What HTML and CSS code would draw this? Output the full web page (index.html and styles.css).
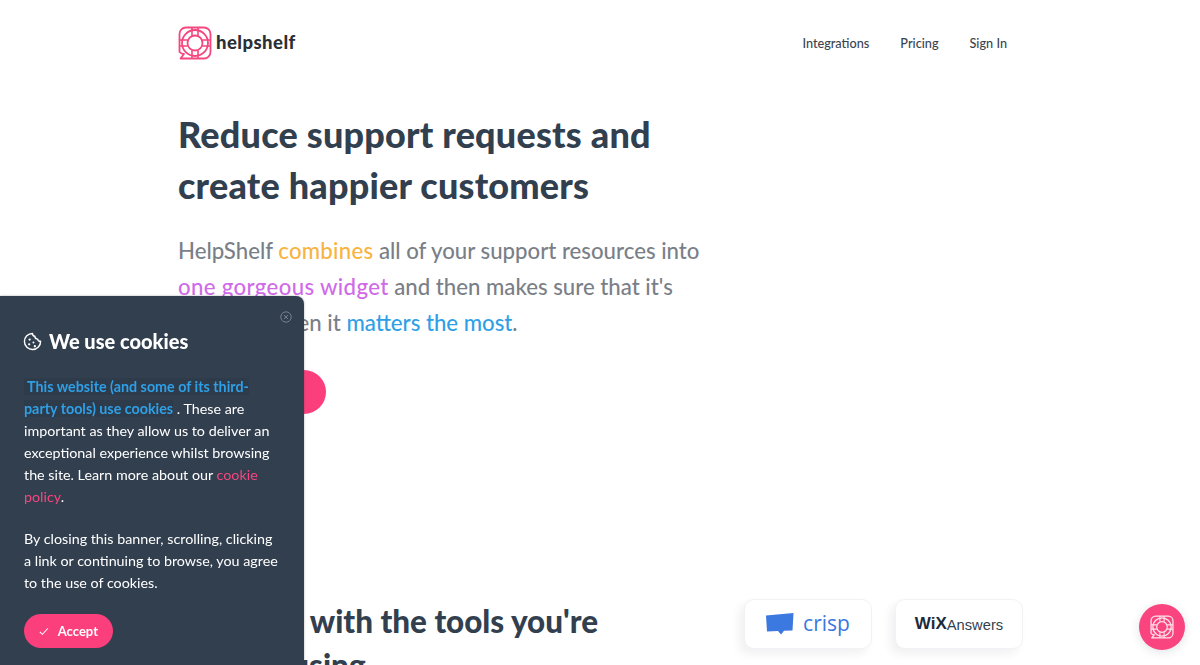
FILE: index.html
```html
<!DOCTYPE html>
<html lang="en">
<head>
<meta charset="utf-8">
<title>HelpShelf</title>
<link rel="stylesheet" href="styles.css">
</head>
<body>
<svg class="defs" width="0" height="0" aria-hidden="true">
  <symbol id="buoy" viewBox="0 0 34 34">
    <path d="M8 1.500h18a6.500 6.500 0 0 1 6.500 6.500v18a6.500 6.500 0 0 1-6.500 6.500H2.500l3.500-4.500A6.500 6.500 0 0 1 1.500 26V8A6.500 6.500 0 0 1 8 1.500z" fill="none" stroke="currentColor" stroke-width="1.800" stroke-linejoin="round"/>
    <circle cx="17" cy="17" r="13" fill="none" stroke="currentColor" stroke-width="1.800"/>
    <circle cx="17" cy="17" r="7.500" fill="none" stroke="currentColor" stroke-width="1.800"/>
    <path d="M14 1.500v8.200M20 1.500v8.200M14 24.300v8.200M20 24.300v8.200M1.500 14h8.200M1.500 20h8.200M24.300 14h8.200M24.300 20h8.200" fill="none" stroke="currentColor" stroke-width="1.600"/>
  </symbol>
</svg>

<div class="page">
  <header class="header">
    <a class="brand" href="#">
      <svg class="brand-icon"><use href="#buoy"/></svg>
      <span class="brand-name">helpshelf</span>
    </a>
    <nav class="nav">
      <a href="#">Integrations</a>
      <a href="#">Pricing</a>
      <a href="#">Sign In</a>
    </nav>
  </header>

  <section class="hero">
    <h1>Reduce support requests and<br>create happier customers</h1>
    <p class="lead">HelpShelf <span class="orange">combines</span> all of your support resources into<br><span class="purple">one gorgeous widget</span> and then makes sure that it's<br>available when it <span class="blue">matters the most</span>.</p>
    <a class="cta" href="#">Get started</a>
  </section>

  <section class="tools">
    <h2><span class="tight">Integrate</span> with the tools you're<br><span class="wide">already</span> using</h2>
    <div class="logos">
      <div class="logo-card">
        <svg class="crisp-icon" viewBox="0 0 28 22"><path d="M0 2.500L27.500 0l-1 17.500-8.500.3-3 3.700-3-3.500-11 .5z" fill="#3b78e0"/></svg>
        <span class="crisp">crisp</span>
      </div>
      <div class="logo-card">
        <span class="wix">WiX</span><span class="answers">Answers</span>
      </div>
    </div>
  </section>
</div>

<aside class="cookie">
  <svg class="cookie-close" viewBox="0 0 12 12"><circle cx="6" cy="6" r="5.200"/><path d="M4 4l4 4M8 4l-4 4"/></svg>
  <h3 class="cookie-title">
    <svg class="cookie-icon" viewBox="0 0 20 20"><path d="M10 1.500a3 3 0 0 0 2.500 3 3 3 0 0 0 3 3 2.500 2.500 0 0 0 3 2.200A8.500 8.500 0 1 1 10 1.500z" fill="none" stroke="#fff" stroke-width="1.500" stroke-linejoin="round"/><circle cx="7" cy="8" r="1.200" fill="#fff"/><circle cx="6.500" cy="13" r="1.200" fill="#fff"/><circle cx="11" cy="11" r="1" fill="#fff"/><circle cx="12.500" cy="15" r="1.200" fill="#fff"/></svg>
    We use cookies
  </h3>
  <p class="cookie-text"><span class="hl">&nbsp;This website (and some of its third-<br>party tools) use cookies</span> . These are<br>important as they allow us to deliver an<br>exceptional experience whilst browsing<br>the site. Learn more about our <a class="pink" href="#">cookie<br>policy</a>.</p>
  <p class="cookie-text">By closing this banner, scrolling, clicking<br>a link or continuing to browse, you agree<br>to the use of cookies.</p>
  <button class="accept" type="button">
    <svg class="check" viewBox="0 0 12 10"><path d="M1 5.500l3.200 3L11 1"/></svg>
    Accept
  </button>
</aside>

<button class="launcher" type="button" aria-label="Open help">
  <svg class="launcher-icon"><use href="#buoy"/></svg>
</button>
</body>
</html>
```
FILE: styles.css
```css
* { box-sizing: border-box; }
html, body { height: 100%; }
body {
  margin: 0;
  overflow: hidden;
  background: #fff;
  font-family: "Lato", "Noto Sans", sans-serif;
  color: #323f4f;
}
a { color: inherit; text-decoration: none; }
.defs { position: absolute; }

.page { padding: 26px 193px 0 178px; }

.header { display: flex; justify-content: space-between; align-items: center; height: 34px; }
.brand { display: flex; align-items: center; gap: 4px; }
.brand-icon { width: 34px; height: 34px; color: #f5467f; }
.brand-name { font-size: 18.5px; font-weight: 900; letter-spacing: 0.45px; color: #2b2f36; margin-top: -2px; }
.nav { display: flex; gap: 31px; font-size: 12.7px; color: #3a4450; font-weight: 500; }

.hero { margin-top: 49px; }
h1 { margin: 0; font-size: 36px; line-height: 51px; font-weight: 900; letter-spacing: 0.2px; color: #323f4f; }
.lead { margin: 22px 0 0; font-size: 22.2px; line-height: 36px; font-weight: 500; color: #7a7f87; }
.orange { color: #f9b340; letter-spacing: 0.25px; }
.purple { color: #cf6be8; letter-spacing: 0.36px; }
.blue { color: #2f9fe6; }
.cta {
  display: inline-block;
  margin-top: 29px;
  height: 44px;
  width: 148px;
  padding: 0 30px;
  border-radius: 22px;
  background: #fb3f7c;
  color: #fff;
  font-size: 15px;
  line-height: 44px;
  font-weight: 700;
}

.tools { display: flex; justify-content: space-between; margin-top: 185px; margin-right: -16px; }
h2 { margin: 0; font-size: 31.4px; line-height: 44px; font-weight: 900; color: #323f4f; }
.tight { letter-spacing: -0.35px; }
.wide { letter-spacing: 0.4px; }
.logos { display: flex; gap: 23px; margin-top: 0; }
.logo-card {
  display: flex;
  align-items: center;
  justify-content: center;
  gap: 9px;
  width: 128px;
  height: 50px;
  border: 1px solid #f1f2f4;
  border-radius: 10px;
  background: #fff;
  box-shadow: -5px 5px 8px rgba(50, 63, 79, 0.07);
}
.crisp-icon { width: 28px; height: 22px; }
.crisp { font-family: "Open Sans", sans-serif; font-size: 21px; font-weight: 500; color: #3b78e0; margin-top: -3px; }
.wix { font-family: "Liberation Sans", sans-serif; font-size: 17px; font-weight: 700; color: #1c2a3a; }
.answers { font-family: "Liberation Sans", sans-serif; font-size: 14.7px; color: #323f4f; margin-left: -9px; margin-top: 1px; }

.cookie {
  position: fixed;
  left: 0;
  bottom: 0;
  width: 304px;
  height: 369px;
  padding: 33px 20px 0 24px;
  background: #323f4f;
  border-radius: 0 8px 0 0;
  box-shadow: 0 0 2px rgba(50, 63, 79, 0.5);
  color: #fff;
}
.cookie-close {
  position: absolute;
  top: 15px;
  right: 12px;
  width: 12px;
  height: 12px;
  fill: none;
  stroke: #76808c;
  stroke-width: 1;
}
.cookie-title { display: flex; align-items: center; gap: 7px; margin: 0 0 23px; font-size: 20px; line-height: 24px; font-weight: 900; }
.cookie-icon { width: 19px; height: 19px; margin-left: -1px; }
.cookie-text { margin: 0 0 20px; font-size: 14.3px; line-height: 22px; white-space: nowrap; }
.hl { color: #2f9fe6; font-weight: 700; background: rgba(30, 44, 60, 0.2); }
.pink { color: #f5467f; }
.accept {
  display: flex;
  align-items: center;
  gap: 9px;
  height: 34px;
  width: 89px;
  margin-top: 0;
  padding: 0 15px;
  border: 0;
  border-radius: 17px;
  background: #fb3f7c;
  color: #fff;
  font: 700 13px "Lato", sans-serif;
}
.check { width: 11px; height: 9px; fill: none; stroke: #fff; stroke-width: 1.300; }

.launcher {
  position: fixed;
  right: 15px;
  bottom: 15px;
  width: 46px;
  height: 46px;
  padding: 0;
  border: 0;
  border-radius: 50%;
  display: flex;
  align-items: center;
  justify-content: center;
  background: #f9447f;
  box-shadow: 0 2px 10px rgba(50, 63, 79, 0.15);
}
.launcher-icon { width: 24px; height: 24px; color: #ffe3ec; }
```
